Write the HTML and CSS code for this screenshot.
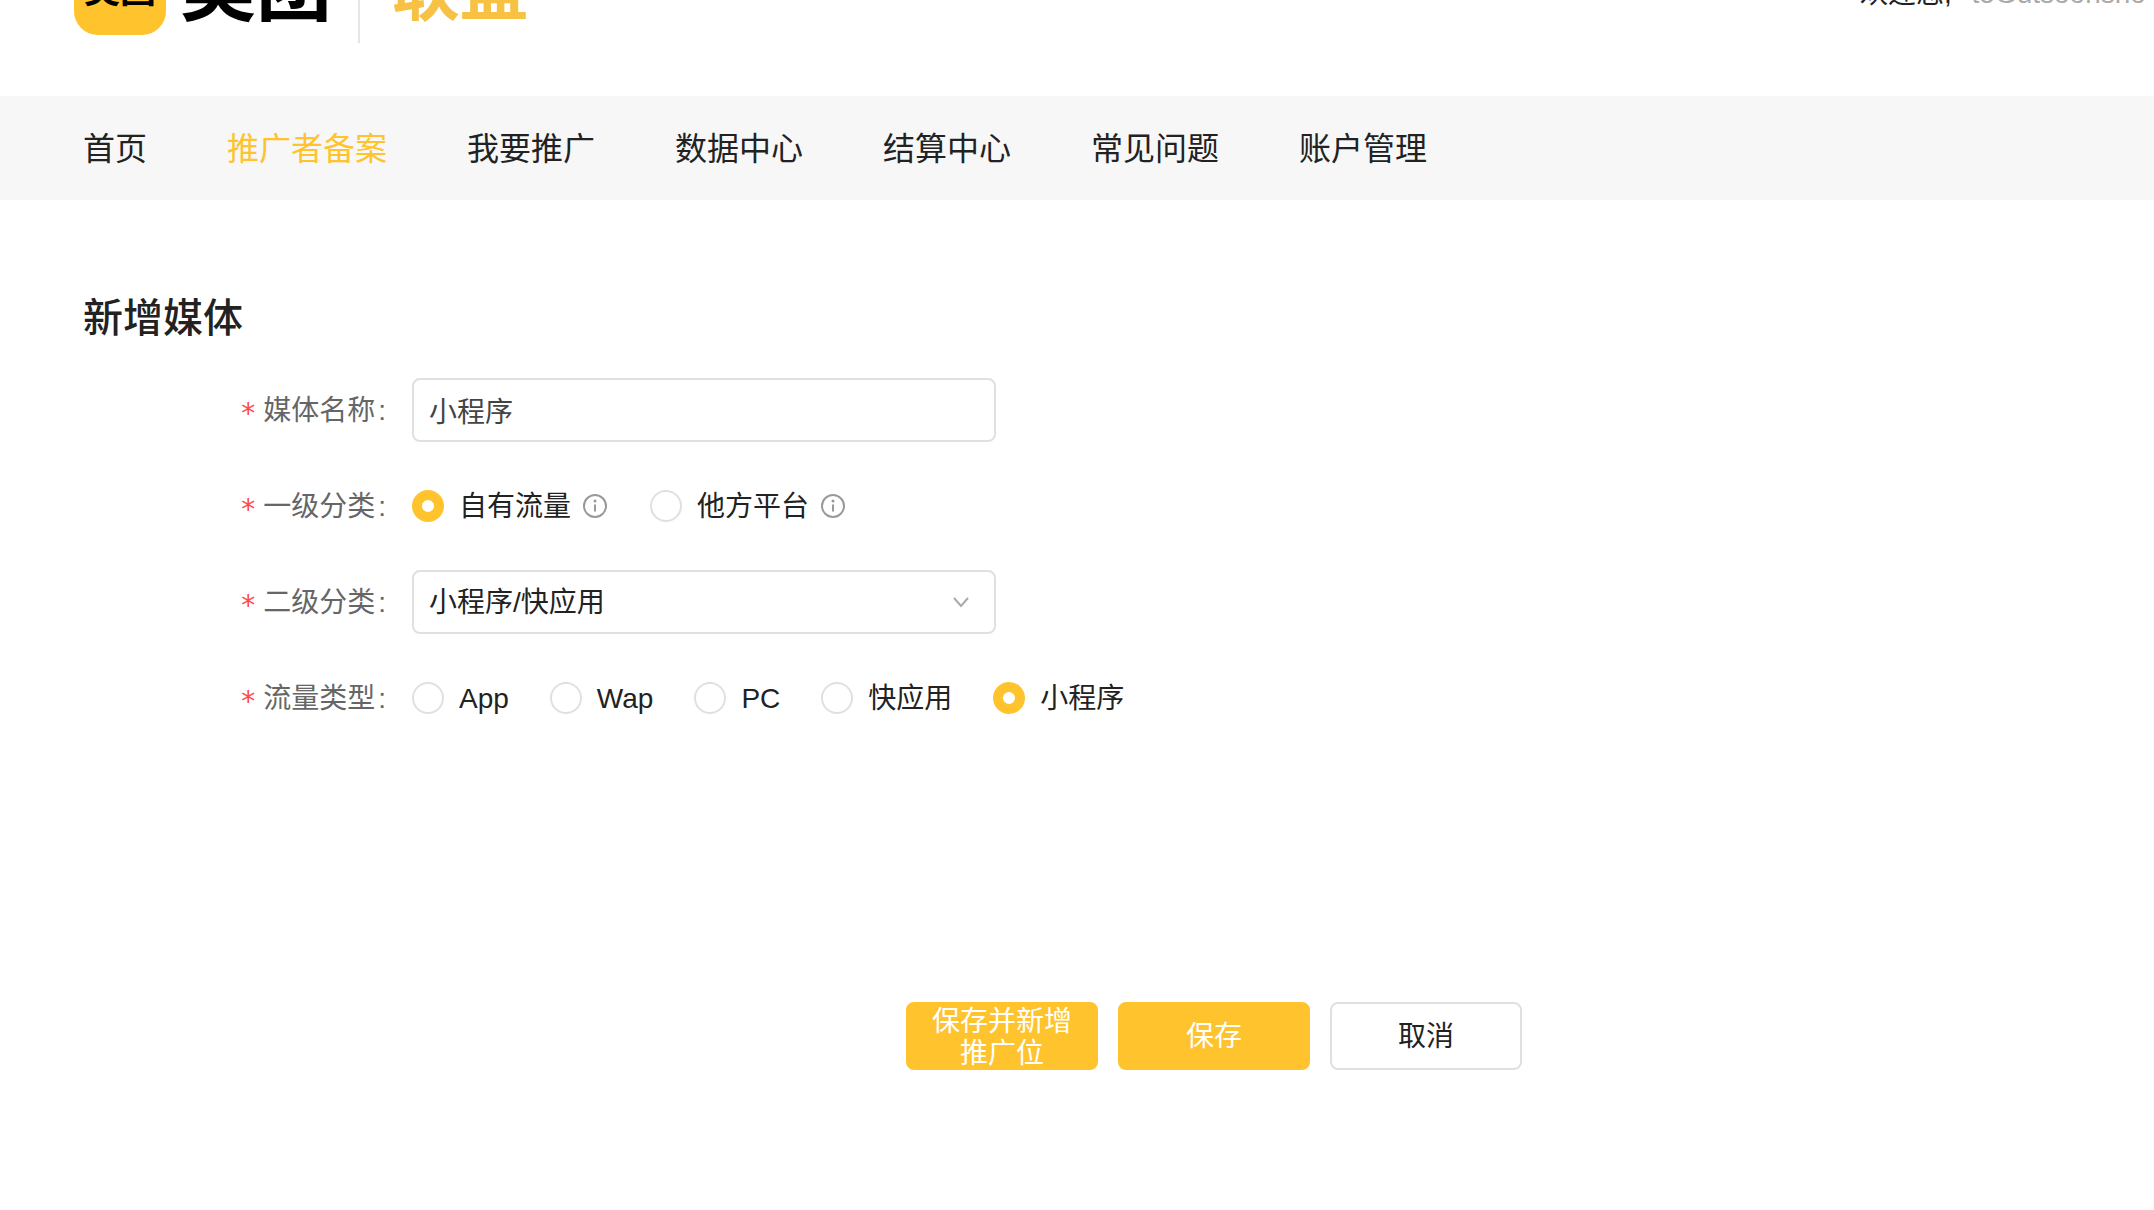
FILE: index.html
```html
<!DOCTYPE html>
<html lang="zh-CN">
<head>
<meta charset="utf-8">
<title>新增媒体 - 美团联盟</title>
<link rel="stylesheet" href="styles.css">
</head>
<body>
<header class="header">
  <a class="brand" href="#">
    <span class="brand-mark">美团</span>
    <span class="brand-name">美团</span>
    <span class="brand-divider"></span>
    <span class="brand-product">联盟</span>
  </a>
  <p class="welcome">欢迎您, <span class="account">t5Gutsoonsno</span></p>
</header>
<nav class="nav">
  <a class="nav-link" href="#">首页</a>
  <a class="nav-link active" href="#">推广者备案</a>
  <a class="nav-link" href="#">我要推广</a>
  <a class="nav-link" href="#">数据中心</a>
  <a class="nav-link" href="#">结算中心</a>
  <a class="nav-link" href="#">常见问题</a>
  <a class="nav-link" href="#">账户管理</a>
</nav>
<main class="main">
  <h1 class="title">新增媒体</h1>
  <form class="form">
    <div class="row">
      <label class="label" for="media-name">媒体名称</label>
      <input class="field" id="media-name" type="text" value="小程序">
    </div>
    <div class="row" role="radiogroup" aria-labelledby="level1">
      <span class="label" id="level1">一级分类</span>
      <div class="options wide">
        <label class="option"><input class="radio" type="radio" name="level1" checked><span class="option-text">自有流量</span>
          <svg class="info" viewBox="0 0 24 24"><circle cx="12" cy="12" r="11"/><path d="M12 10.500v7"/><circle class="info-dot" cx="12" cy="7" r="1.500"/></svg></label>
        <label class="option"><input class="radio" type="radio" name="level1"><span class="option-text">他方平台</span>
          <svg class="info" viewBox="0 0 24 24"><circle cx="12" cy="12" r="11"/><path d="M12 10.500v7"/><circle class="info-dot" cx="12" cy="7" r="1.500"/></svg></label>
      </div>
    </div>
    <div class="row">
      <label class="label" for="level2">二级分类</label>
      <div class="select-wrap">
        <select class="field select" id="level2"><option>小程序/快应用</option></select>
        <svg class="arrow" viewBox="0 0 18 12"><path d="M2 2l7 8 7-8"/></svg>
      </div>
    </div>
    <div class="row" role="radiogroup" aria-labelledby="traffic">
      <span class="label" id="traffic">流量类型</span>
      <div class="options">
        <label class="option"><input class="radio" type="radio" name="traffic"><span class="option-text">App</span></label>
        <label class="option"><input class="radio" type="radio" name="traffic"><span class="option-text">Wap</span></label>
        <label class="option"><input class="radio" type="radio" name="traffic"><span class="option-text">PC</span></label>
        <label class="option"><input class="radio" type="radio" name="traffic"><span class="option-text">快应用</span></label>
        <label class="option"><input class="radio" type="radio" name="traffic" checked><span class="option-text">小程序</span></label>
      </div>
    </div>
    <div class="actions">
      <button class="button primary" type="submit">保存并新增推广位</button>
      <button class="button primary" type="submit">保存</button>
      <button class="button" type="button">取消</button>
    </div>
  </form>
</main>
</body>
</html>
```
FILE: styles.css
```css
* {
  box-sizing: border-box;
}

body {
  margin: 0;
  background: #fff;
  color: #222;
  font: 28px/32px "Liberation Sans", "Noto Sans CJK SC", sans-serif;
}

/* The top of the header sits above the fold, as on a scrolled page. */
.header {
  display: flex;
  align-items: center;
  justify-content: space-between;
  height: 214px;
  margin-top: -118px;
  padding-left: 74px;
  overflow: hidden;
  white-space: nowrap;
}

.brand {
  display: flex;
  align-items: center;
  color: #000;
  text-decoration: none;
}

.brand-mark {
  width: 92px;
  height: 92px;
  border-radius: 24px;
  background: #ffc32d;
  font-size: 36px;
  font-weight: 700;
  line-height: 96px;
  text-align: center;
}

.brand-name {
  margin-left: 14px;
  font-size: 76px;
  font-weight: 700;
  line-height: 92px;
}

.brand-divider {
  width: 2px;
  height: 108px;
  margin: 0 32px 0 26px;
  background: #e5e5e5;
}

.brand-product {
  padding-top: 4px;
  color: #f7c244;
  font-size: 68px;
  font-weight: 700;
  line-height: 92px;
}

.welcome {
  width: 294px;
  margin: 0;
  padding-top: 10px;
}

.account {
  margin-left: 12px;
  color: #aaa;
}

.nav {
  display: flex;
  gap: 80px;
  padding: 33px 83px 31px;
  background: #f7f7f7;
  font-size: 32px;
  line-height: 40px;
}

.nav-link {
  color: #222;
  text-decoration: none;
}

.nav-link.active {
  color: #ffc32d;
}

.main {
  padding: 88px 83px 140px;
}

.title {
  margin: 0 0 30px;
  font-size: 40px;
  font-weight: 500;
  line-height: 60px;
}

.form {
  display: grid;
  gap: 32px;
}

.row {
  display: grid;
  grid-template-columns: 303px 1fr;
  column-gap: 26px;
  align-items: center;
  min-height: 64px;
}

.label {
  padding-top: 2px;
  color: #666;
  text-align: right;
}

.label::before {
  content: "*";
  margin-right: 8px;
  color: #ff4a4a;
  font-family: "DejaVu Sans", sans-serif;
  vertical-align: -3px;
  line-height: 1px;
}

.label::after {
  content: ":";
  margin-left: 3px;
}

.field {
  width: 100%;
  max-width: 584px;
  height: 64px;
  padding: 0 15px;
  border: 2px solid #e0e0e0;
  border-radius: 8px;
  background: #fff;
  color: #444;
  font: inherit;
}

.select-wrap {
  position: relative;
  max-width: 584px;
}

.select {
  appearance: none;
  padding-top: 2px;
  color: #222;
}

.arrow {
  position: absolute;
  top: 26px;
  right: 26px;
  width: 18px;
  height: 12px;
  fill: none;
  stroke: #aaa;
  stroke-width: 2;
  pointer-events: none;
}

.options {
  display: flex;
  gap: 41px;
}

.options.wide {
  gap: 43px;
}

.option {
  display: flex;
  align-items: center;
}

.option-text {
  padding-top: 2px;
}

.radio {
  appearance: none;
  width: 32px;
  height: 32px;
  margin: 0 15px 0 0;
  border: 2px solid #e0e0e0;
  border-radius: 50%;
  background: #fff;
}

.radio:checked {
  border: 10px solid #ffc32d;
}

.info {
  width: 24px;
  height: 24px;
  margin-left: 12px;
  fill: none;
  stroke: #999;
  stroke-width: 2;
}

.info-dot {
  fill: #999;
  stroke: none;
}

.actions {
  display: flex;
  gap: 20px;
  margin: 240px 0 0 823px;
}

.button {
  width: 192px;
  height: 68px;
  padding: 2px 20px 0;
  border: 2px solid #e0e0e0;
  border-radius: 8px;
  background: #fff;
  color: #222;
  font: inherit;
}

.button.primary {
  border-color: #ffc32d;
  background: #ffc32d;
  color: #fff;
}
```
